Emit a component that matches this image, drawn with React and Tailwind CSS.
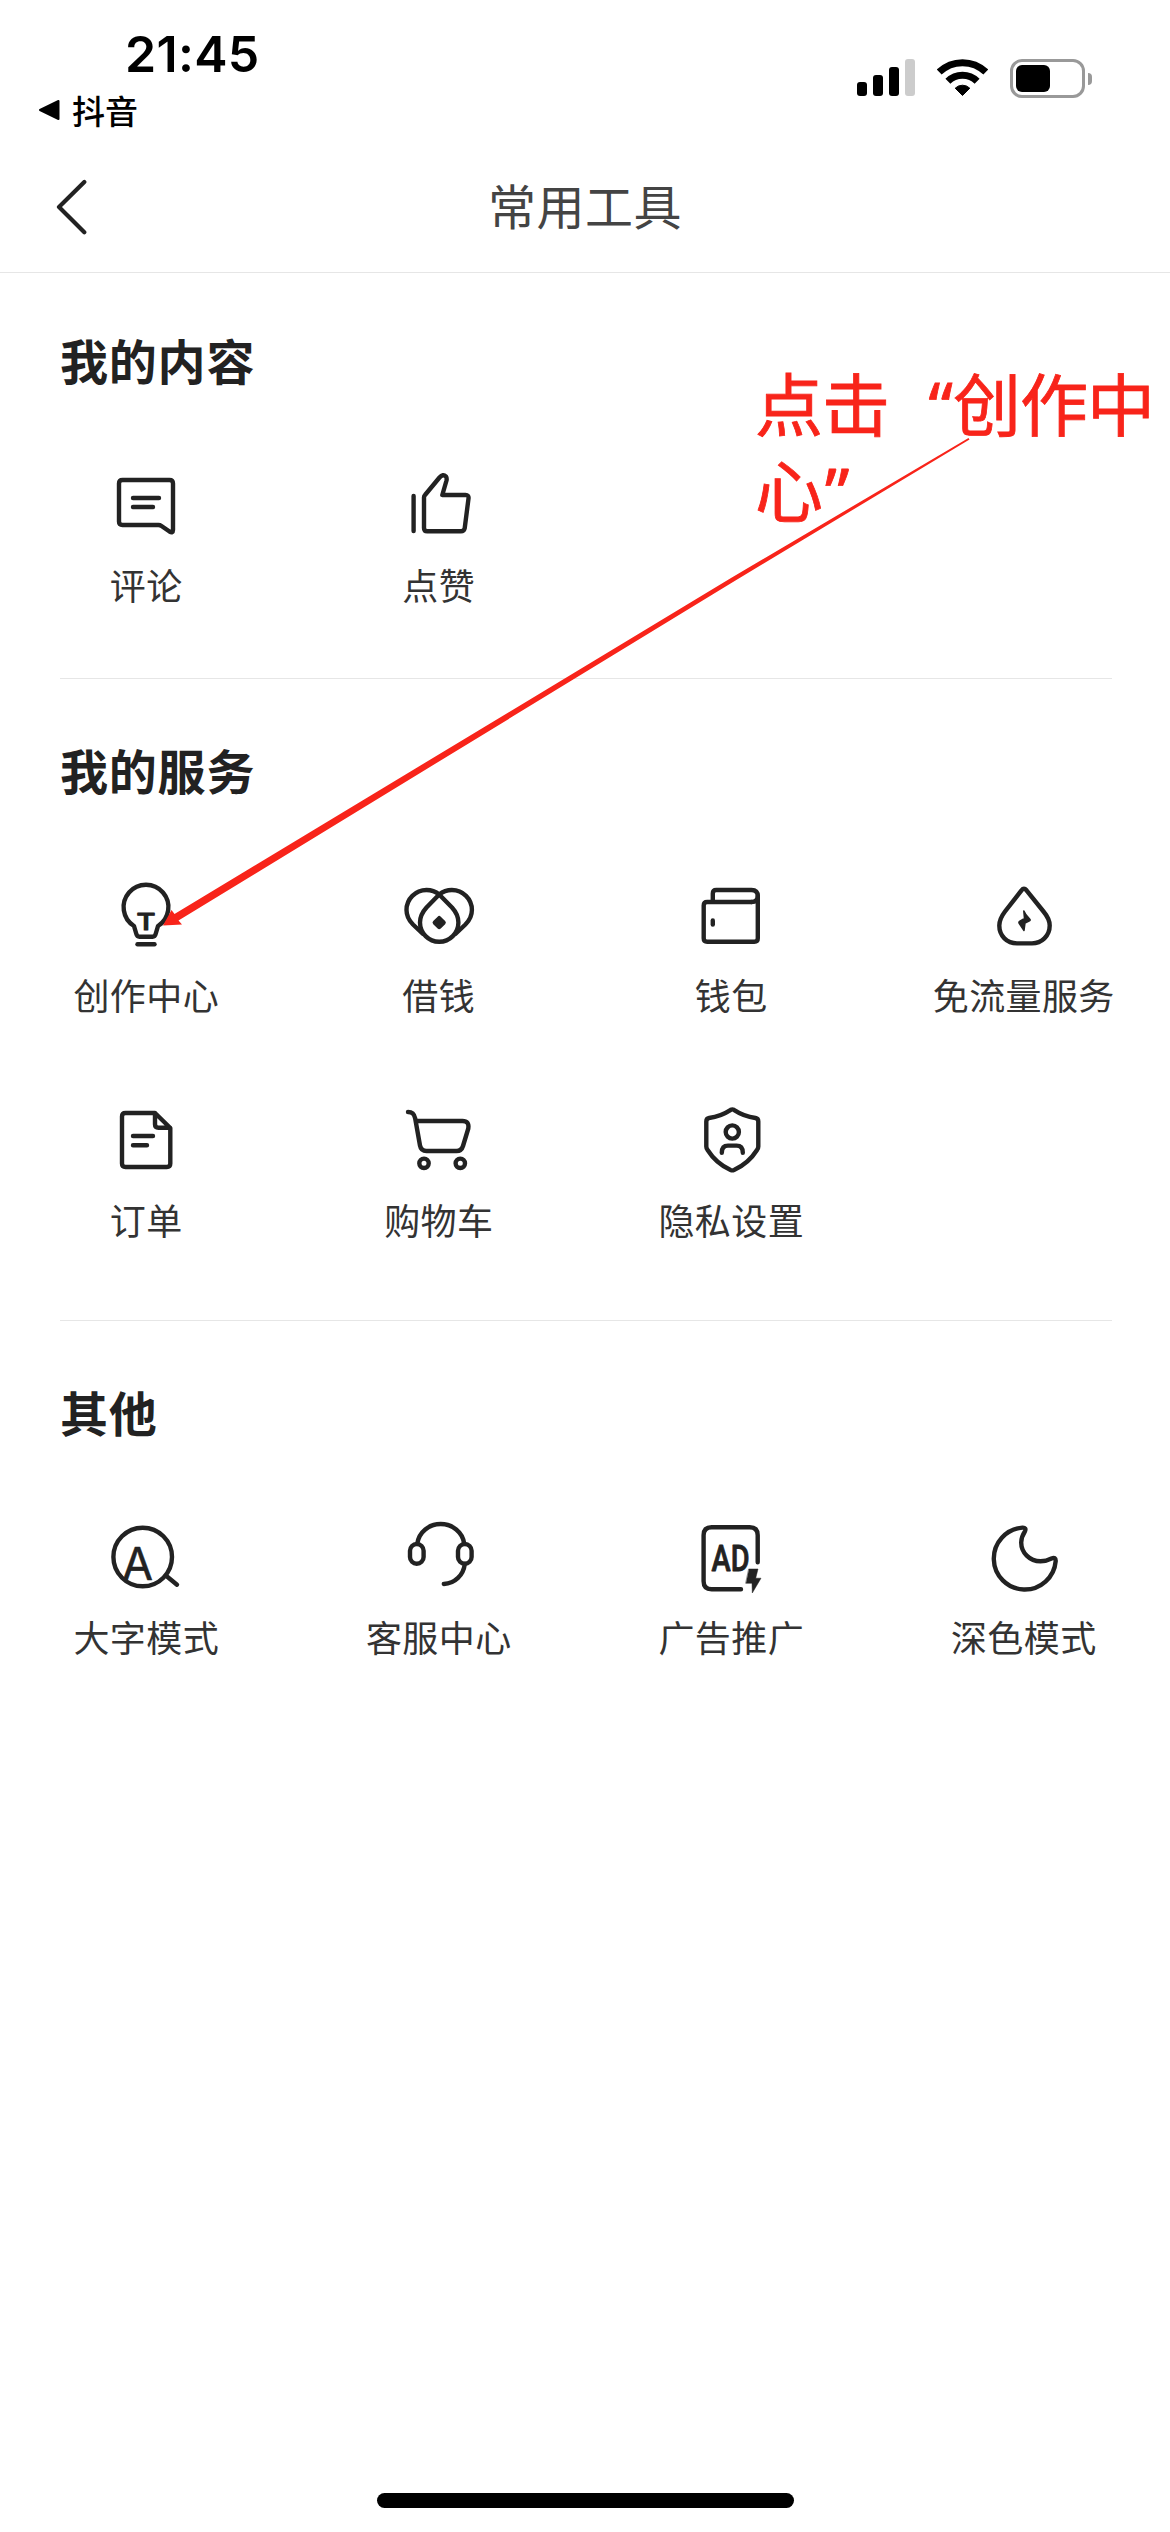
import clsx from "clsx";

const contentTools = [
  { label: "评论", icon: CommentIcon },
  { label: "点赞", icon: LikeIcon },
];

const serviceTools = [
  { label: "创作中心", icon: BulbIcon },
  { label: "借钱", icon: LoanIcon },
  { label: "钱包", icon: WalletIcon },
  { label: "免流量服务", icon: DataIcon },
  { label: "订单", icon: OrderIcon },
  { label: "购物车", icon: CartIcon },
  { label: "隐私设置", icon: PrivacyIcon },
];

const otherTools = [
  { label: "大字模式", icon: BigTextIcon },
  { label: "客服中心", icon: SupportIcon },
  { label: "广告推广", icon: AdIcon },
  { label: "深色模式", icon: MoonIcon },
];

function Icon({ children }) {
  return (
    <svg
      className="block h-[72px] w-[72px] overflow-visible text-[#222]"
      viewBox="0 0 72 72"
      fill="none"
      stroke="currentColor"
      strokeWidth="4.4"
      strokeLinecap="round"
      strokeLinejoin="round"
    >
      {children}
    </svg>
  );
}

function CommentIcon() {
  return (
    <Icon>
      <path d="M12.500 10H59.500Q63 10 63 13.500V60Q63 63.500 59.500 61.500L51.500 56Q50 55 48.500 55H12.500Q9 55 9 51.500V13.500Q9 10 12.500 10Z" />
      <path d="M23 28H49M23 37H43" />
    </Icon>
  );
}

function LikeIcon() {
  return (
    <Icon>
      <path d="M10.600 26V61" />
      <path d="M21 58V27.500Q21 26 22 25L36.500 7.500Q40 3.500 43 6.500Q44 8 43.500 10.500L39.300 25H62.500Q66 25 65.500 28.500L61.700 58.300Q61 61.300 58 61.300H24.200Q21 61.300 21 58Z" />
    </Icon>
  );
}

function BulbIcon() {
  return (
    <Icon>
      <path d="M24 46A22.400 22.400 0 1 1 48 46L45.800 53.500Q45 56.700 42.500 56.700H29.500Q27 56.700 26.200 53.500L24 46Z" />
      <text
        x="26.500"
        y="49.500"
        textLength="19"
        lengthAdjust="spacingAndGlyphs"
        className="font-['Inter'] text-[23px] font-medium"
        fill="currentColor"
        strokeWidth="1"
      >
        T
      </text>
      <path d="M27.500 64.300H44.500" />
    </Icon>
  );
}

function LoanIcon() {
  return (
    <Icon>
      <path d="M36.200 14.500C32.500 11.500 28 10 23.500 10A20 20 0 0 0 3.500 30C3.500 36 6 40.500 10 44.500L20 54" />
      <path d="M36.200 14.500C39.900 11.500 44.400 10 48.900 10A20 20 0 0 1 68.900 30C68.900 36 66.400 40.500 62.400 44.500L52.400 54" />
      <path d="M36.200 14.500L23.500 27.500C18.500 33 17 37 17 42.500A19.200 19.200 0 0 0 55.400 42.500C55.400 37 54 33 49 27.500Z" />
      <path d="M36.200 38.200L40.600 42.600L36.200 47L31.800 42.600Z" fill="currentColor" />
    </Icon>
  );
}

function WalletIcon() {
  return (
    <Icon>
      <path d="M56.500 22H12.200Q8.700 22 8.700 25.500V58.300Q8.700 61.800 12.200 61.800H59.300Q62.800 61.800 62.800 58.300V16.300Q62.800 10 56.500 10H21.300Q17.800 10 17.800 13.500V22" />
      <path d="M56.500 22Q62.800 22 62.800 16" />
      <path d="M17.800 40.500V44.500" />
    </Icon>
  );
}

function DataIcon() {
  return (
    <Icon>
      <path d="M33.500 10.300Q35.900 7.300 38.500 10.300L55.500 31.500Q61.700 39 61.700 45.500C61.700 56 53.500 63.400 44 63.400H29C19 63.400 11.300 56 11.300 45.500Q11.300 39 17 31.500Z" />
      <path d="M35.800 31L38 34.800L42 39.500Q42.500 40.300 41.500 40.800L37 43L36 50.500L31 43Q30.500 42 31.500 41.300L36.500 38.500Z" fill="currentColor" strokeWidth="1.500" />
    </Icon>
  );
}

function OrderIcon() {
  return (
    <Icon>
      <path d="M45 8H15.500Q12 8 12 11.500V58.500Q12 62 15.500 62H56.800Q60.300 62 60.300 58.500V23L45 8V19.200Q45 22.700 48.500 22.700H60" />
      <path d="M23 31H43M23 40.300H37" />
    </Icon>
  );
}

function CartIcon() {
  return (
    <Icon>
      <path d="M5 7C9.500 7 11.300 9 12.200 13.500L17 40.500Q18 46 23.500 46H53.500Q58.500 46 60 41L65.300 23.500Q66.500 16 59.500 16H12.800" />
      <circle cx="21" cy="58.300" r="4.700" />
      <circle cx="57.300" cy="58.300" r="4.700" />
    </Icon>
  );
}

function PrivacyIcon() {
  return (
    <Icon>
      <path d="M35.800 4.800Q37.300 4 38.800 4.800C46 9.500 52 11.800 60.500 13Q63.300 13.500 63.300 16.500V41.500Q63.300 43.500 62 45C56 54.500 49 60.500 39 65Q37.300 65.700 35.600 65C25.600 60.500 18.600 54.500 12.600 45Q11.300 43.500 11.300 41.500V16.500Q11.300 13.500 14.100 13C22.600 11.800 28.600 9.500 35.800 4.800Z" />
      <circle cx="37.300" cy="27" r="6.600" />
      <path d="M26.800 47.700C26.800 43 29 40.600 33 40.600H41.600C45.600 40.600 47.800 43 47.800 47.700" />
    </Icon>
  );
}

function BigTextIcon() {
  return (
    <Icon>
      <circle cx="32.700" cy="35" r="29.300" />
      <path d="M57 54.500L67 62.700" />
      <text x="27.500" y="58" textAnchor="middle" className="font-['Inter'] text-[45px]" fill="currentColor" strokeWidth="0.500">
        A
      </text>
    </Icon>
  );
}

function SupportIcon() {
  return (
    <Icon>
      <path d="M14.300 21.500C16 10 26 2 37.700 2S59.500 10 61.200 21.500" />
      <rect x="7" y="22" width="13.600" height="19.700" rx="6.800" />
      <rect x="55" y="22" width="13.600" height="19.700" rx="6.800" />
      <path d="M61.800 42C60.500 53 52 61.500 40.800 62" />
    </Icon>
  );
}

function AdIcon() {
  return (
    <Icon>
      <path d="M62.700 40.300V13.200Q62.700 5.200 54.700 5.200H16.600Q8.600 5.200 8.600 13.200V59.200Q8.600 67.200 16.600 67.200H46" />
      <text
        x="16.500"
        y="49"
        textLength="38"
        lengthAdjust="spacingAndGlyphs"
        className="font-['Roboto'] text-[36px] font-medium"
        fill="currentColor"
        strokeWidth="0.800"
      >
        AD
      </text>
      <path d="M54 47H63L60.700 56.200H66L57.300 71L57 61.300H51Z" fill="currentColor" strokeWidth="0.500" />
    </Icon>
  );
}

function MoonIcon() {
  return (
    <Icon>
      <path d="M34.500 5.600A31 31 0 1 0 67.700 39Q67.800 34.500 63.500 36.500C60 38.300 56.500 39.300 52.500 39.300C41.500 39.300 33.200 30.500 33.200 20.500C33.200 16.500 34.500 13 37 9.200Q38.600 5.400 34.500 5.600Z" />
    </Icon>
  );
}

function StatusBar() {
  return (
    <div className="flex h-[142px] justify-between text-black">
      <div className="pt-[29px] pl-[38px]">
        <div className="pl-[87px] font-['Inter'] text-[50px] leading-[50px] font-semibold tracking-[0.3px]">21:45</div>
        <div className="mt-[11px] flex items-center gap-[12px]">
          <svg className="h-[22px] w-[22px]" viewBox="0 0 22 22">
            <path d="M2 11L20.500 2V20Z" fill="black" stroke="black" strokeWidth="2" strokeLinejoin="round" />
          </svg>
          <span className="text-[33px] leading-[40px] font-medium">抖音</span>
        </div>
      </div>
      <div className="mt-[58px] flex h-[40px] items-end gap-[22px] pr-[78px]">
        <div className="flex h-[40px] items-end gap-[6px] pb-[2px]">
          <div className="h-[14px] w-[10px] rounded-[3px] bg-black"></div>
          <div className="h-[21px] w-[10px] rounded-[3px] bg-black"></div>
          <div className="h-[29px] w-[10px] rounded-[3px] bg-black"></div>
          <div className="h-[37px] w-[10px] rounded-[3px] bg-[#ccc]"></div>
        </div>
        <svg className="h-[40px] w-[51px]" viewBox="0 0 51 40" fill="none" stroke="black" strokeWidth="7">
          <path d="M2.200 14.100A33.500 33.500 0 0 1 48.800 14.100" />
          <path d="M10.900 23.300A20.700 20.700 0 0 1 40.100 23.300" />
          <path d="M25.500 37.500L18.200 30.200A10.400 10.400 0 0 1 32.800 30.200Z" fill="black" strokeWidth="1" strokeLinejoin="round" />
        </svg>
        <div className="flex items-center gap-[3px]">
          <div className="h-[39px] w-[75px] rounded-[12px] border-[3px] border-[#999] p-[3px]">
            <div className="h-[27px] w-[34px] rounded-[6px] bg-black"></div>
          </div>
          <div className="h-[12px] w-[4px] rounded-r-full bg-[#999]"></div>
        </div>
      </div>
    </div>
  );
}

function ToolSection({ title, tools, className }) {
  return (
    <section className={className}>
      <h2 className="pl-[60px] text-[48px] leading-[48px] font-bold tracking-[0.8px] text-[#222]">{title}</h2>
      <div className="mt-[87px] grid grid-cols-4 gap-y-[91px]">
        {tools.map(({ label, icon: ToolIcon }) => (
          <div key={label} className="flex flex-col items-center">
            <ToolIcon />
            <span className="mt-[22px] text-[36px] leading-[40px] tracking-[0.4px] whitespace-nowrap text-[#333]">{label}</span>
          </div>
        ))}
      </div>
    </section>
  );
}

function Divider({ className }) {
  return <div className={clsx("mr-[58px] ml-[60px] h-px bg-[#e6e6e6]", className)}></div>;
}

function App() {
  return (
    <div className="relative flex h-[2532px] w-[1170px] flex-col overflow-hidden bg-white font-['Noto_Sans_CJK_SC',sans-serif]">
      <StatusBar />

      <header className="flex h-[131px] items-center border-b border-[#e6e6e6]">
        <svg className="ml-[56px] h-[56px] w-[32px]" viewBox="0 0 32 56" fill="none">
          <path d="M28.300 3L3 28L28.300 53.300" stroke="#222" strokeWidth="4.200" strokeLinecap="round" strokeLinejoin="round" />
        </svg>
        <h1 className="flex-1 pr-[88px] pb-[6px] text-center text-[48px] leading-[48px] tracking-[0.5px] text-[#444]">常用工具</h1>
      </header>

      <ToolSection title="我的内容" tools={contentTools} className="pt-[62px]" />
      <Divider className="mt-[74px]" />
      <ToolSection title="我的服务" tools={serviceTools} className="pt-[66px]" />
      <Divider className="mt-[81px]" />
      <ToolSection title="其他" tools={otherTools} className="pt-[66px]" />

      <div className="mx-auto mt-auto mb-[24px] h-[15px] w-[417px] rounded-full bg-black"></div>

      {/* guide note and arrow over the page */}
      <p className="absolute top-[359px] left-[755px] text-[68px] leading-[86px] tracking-[-1px] whitespace-nowrap text-[#f8241a] [-webkit-text-stroke:0.8px_#f8241a]">
        点击
        <span className="inline-block w-[64px] pr-[1px] text-right font-['Noto_Sans'] leading-none">“</span>
        创作中
        <br />
        心<span className="ml-[3px] font-['Noto_Sans'] leading-none">”</span>
      </p>
      <svg className="absolute top-0 left-0 h-[1000px] w-[1170px]" viewBox="0 0 1170 1000">
        <path d="M968.500 438L163 925.500L182 924.500L178.500 920.500L733 582L969.500 439.500ZM163 925.500L171.500 910L174.500 914L731 578L968.500 438Z" fill="#f8241a" />
      </svg>
    </div>
  );
}

export default App;
